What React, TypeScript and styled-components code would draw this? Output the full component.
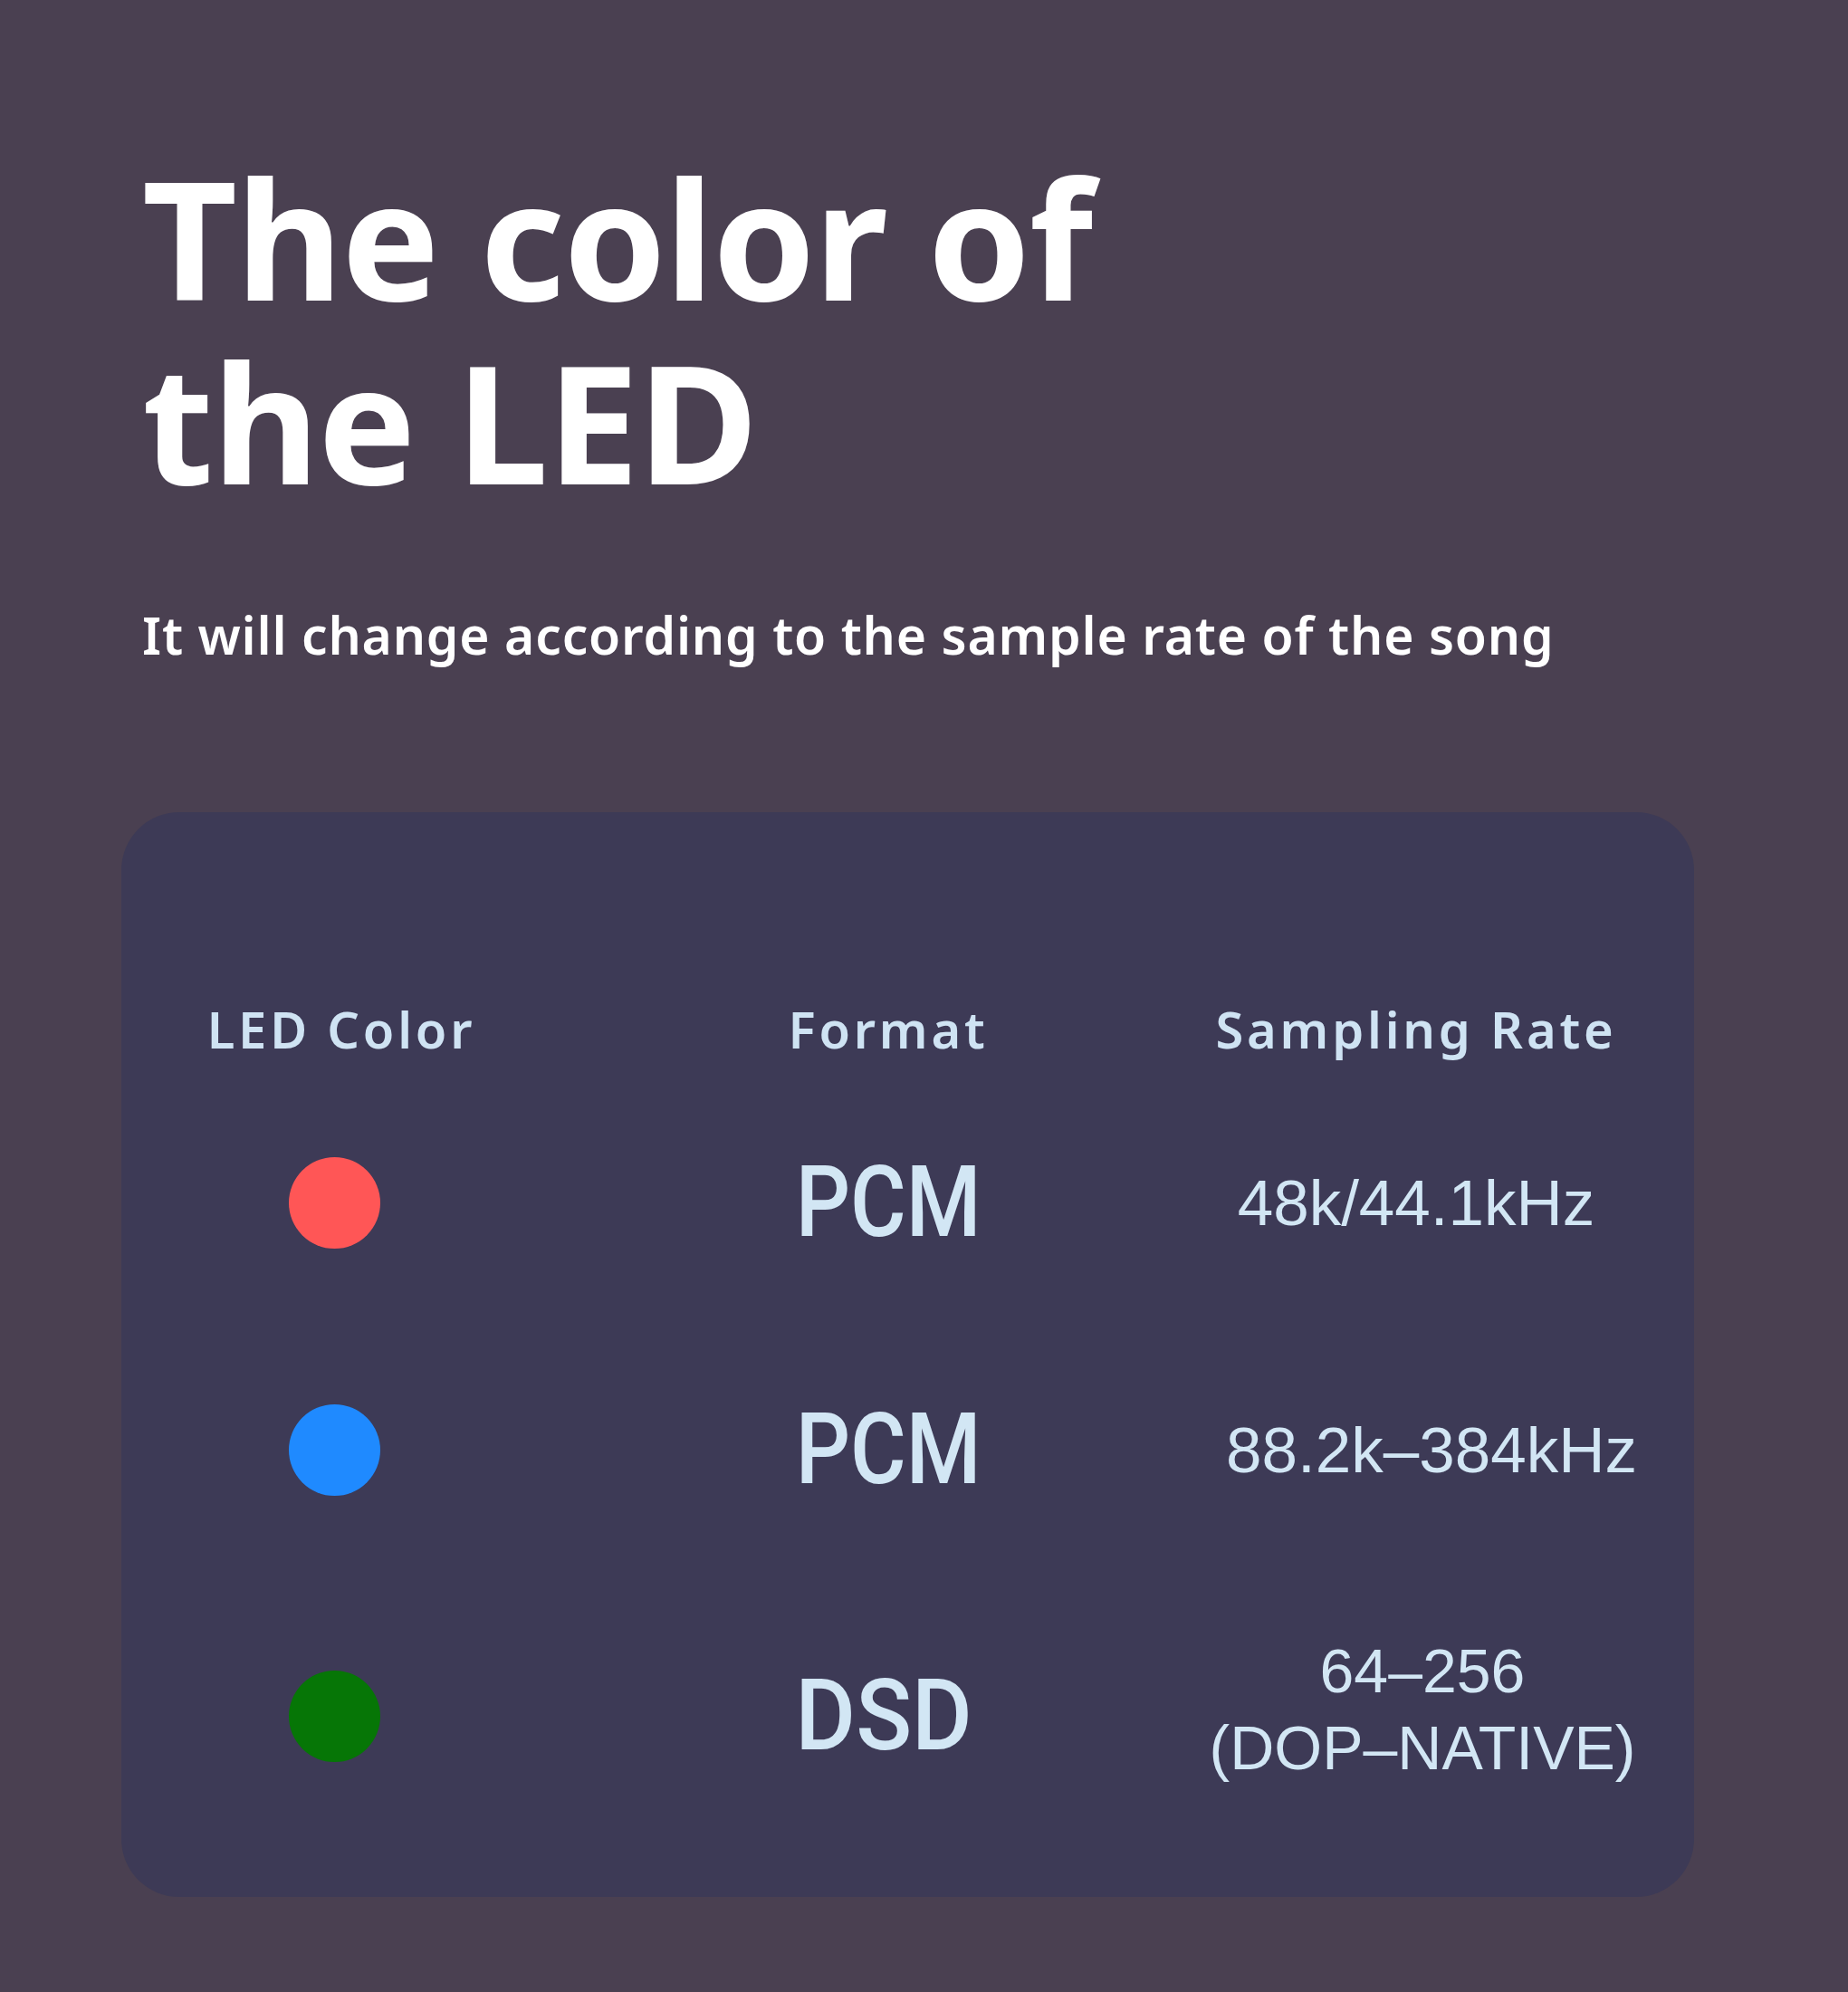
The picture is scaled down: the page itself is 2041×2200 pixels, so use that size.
import React from "react";
import styled, { createGlobalStyle } from "styled-components";

const Global = createGlobalStyle`
  html, body {
    margin: 0;
    padding: 0;
    background: #4a4051;
  }
  #root {
    min-height: 2200px;
  }
`;

const Page = styled.main`
  min-height: 2200px;
  box-sizing: border-box;
  padding-top: 160px;
  font-family: "Noto Sans", "Open Sans", sans-serif;
`;

const Title = styled.h1`
  margin: 0 0 0 157px;
  font-family: "Noto Sans", "Open Sans", sans-serif;
  font-size: 182px;
  line-height: 203px;
  font-weight: 700;
  color: #ffffff;
  letter-spacing: -1.6px;
`;

const Subtitle = styled.p`
  margin: 101px 0 0 157px;
  font-family: "Noto Sans", "Open Sans", sans-serif;
  font-size: 57px;
  line-height: 68px;
  font-weight: 600;
  letter-spacing: 0.8px;
  color: #ffffff;
`;

const Card = styled.section`
  margin: 162px 0 0 134px;
  width: 1737px;
  height: 1198px;
  box-sizing: border-box;
  padding-top: 189px;
  background: #3d3a56;
  border-radius: 64px;
  display: flex;
  flex-direction: column;
`;

const Row = styled.div<{ $h: number }>`
  display: grid;
  grid-template-columns: 470px 754px 412px;
  height: ${(p) => p.$h}px;
  align-items: center;
  justify-items: center;
`;

const HeaderCell = styled.div<{ $shift?: number }>`
  font-family: "Noto Sans", "Open Sans", sans-serif;
  font-size: 56px;
  line-height: 1;
  font-weight: 600;
  letter-spacing: 3.8px;
  white-space: nowrap;
  color: #cfe3f3;
  margin-left: ${(p) => (p.$shift ?? 0) * 2}px;
`;

const Dot = styled.span<{ $color: string }>`
  display: block;
  width: 101px;
  height: 101px;
  border-radius: 50%;
  background: ${(p) => p.$color};
`;

const Format = styled.div<{ $scale: number; $shift: number }>`
  font-family: Roboto, "Liberation Sans", sans-serif;
  font-size: 110px;
  line-height: 1;
  font-weight: 500;
  color: #d2e6f4;
  white-space: nowrap;
  margin-left: ${(p) => p.$shift * 2}px;
  transform: scaleX(${(p) => p.$scale});
`;

const Rate = styled.div<{ $shift: number; $size: number; $lift: number }>`
  font-family: "Liberation Sans", Arial, sans-serif;
  font-size: ${(p) => p.$size}px;
  line-height: 85px;
  text-align: center;
  white-space: nowrap;
  color: #d2e6f4;
  margin-left: ${(p) => p.$shift * 2}px;
  margin-bottom: ${(p) => p.$lift * 2}px;
`;

const rows = [
  { color: "#ff5656", format: "PCM", scale: 0.86, fShift: 0, rate: ["48k/44.1kHz"], size: 71, h: 284, shift: 0, lift: 0 },
  { color: "#1f8aff", format: "PCM", scale: 0.86, fShift: 0, rate: ["88.2k\u2013384kHz"], size: 71, h: 262, shift: 17, lift: 0 },
  { color: "#067606", format: "DSD", scale: 0.93, fShift: -5, rate: ["64\u2013256", "(DOP\u2013NATIVE)"], size: 68, h: 326, shift: 7, lift: 7 },
];

export default function App() {
  return (
    <>
      <Global />
      <Page>
        <Title>
          The color of
          <br />
          the LED
        </Title>
        <Subtitle>It will change according to the sample rate of the song</Subtitle>
        <Card>
          <Row $h={100}>
            <HeaderCell $shift={8}>LED Color</HeaderCell>
            <HeaderCell>Format</HeaderCell>
            <HeaderCell>Sampling Rate</HeaderCell>
          </Row>
          {rows.map((r, i) => (
            <Row key={i} $h={r.h}>
              <Dot $color={r.color} />
              <Format $scale={r.scale} $shift={r.fShift}>
                {r.format}
              </Format>
              <Rate $shift={r.shift} $size={r.size} $lift={r.lift}>
                {r.rate.map((line, j) => (
                  <React.Fragment key={j}>
                    {j > 0 && <br />}
                    {line}
                  </React.Fragment>
                ))}
              </Rate>
            </Row>
          ))}
        </Card>
      </Page>
    </>
  );
}
